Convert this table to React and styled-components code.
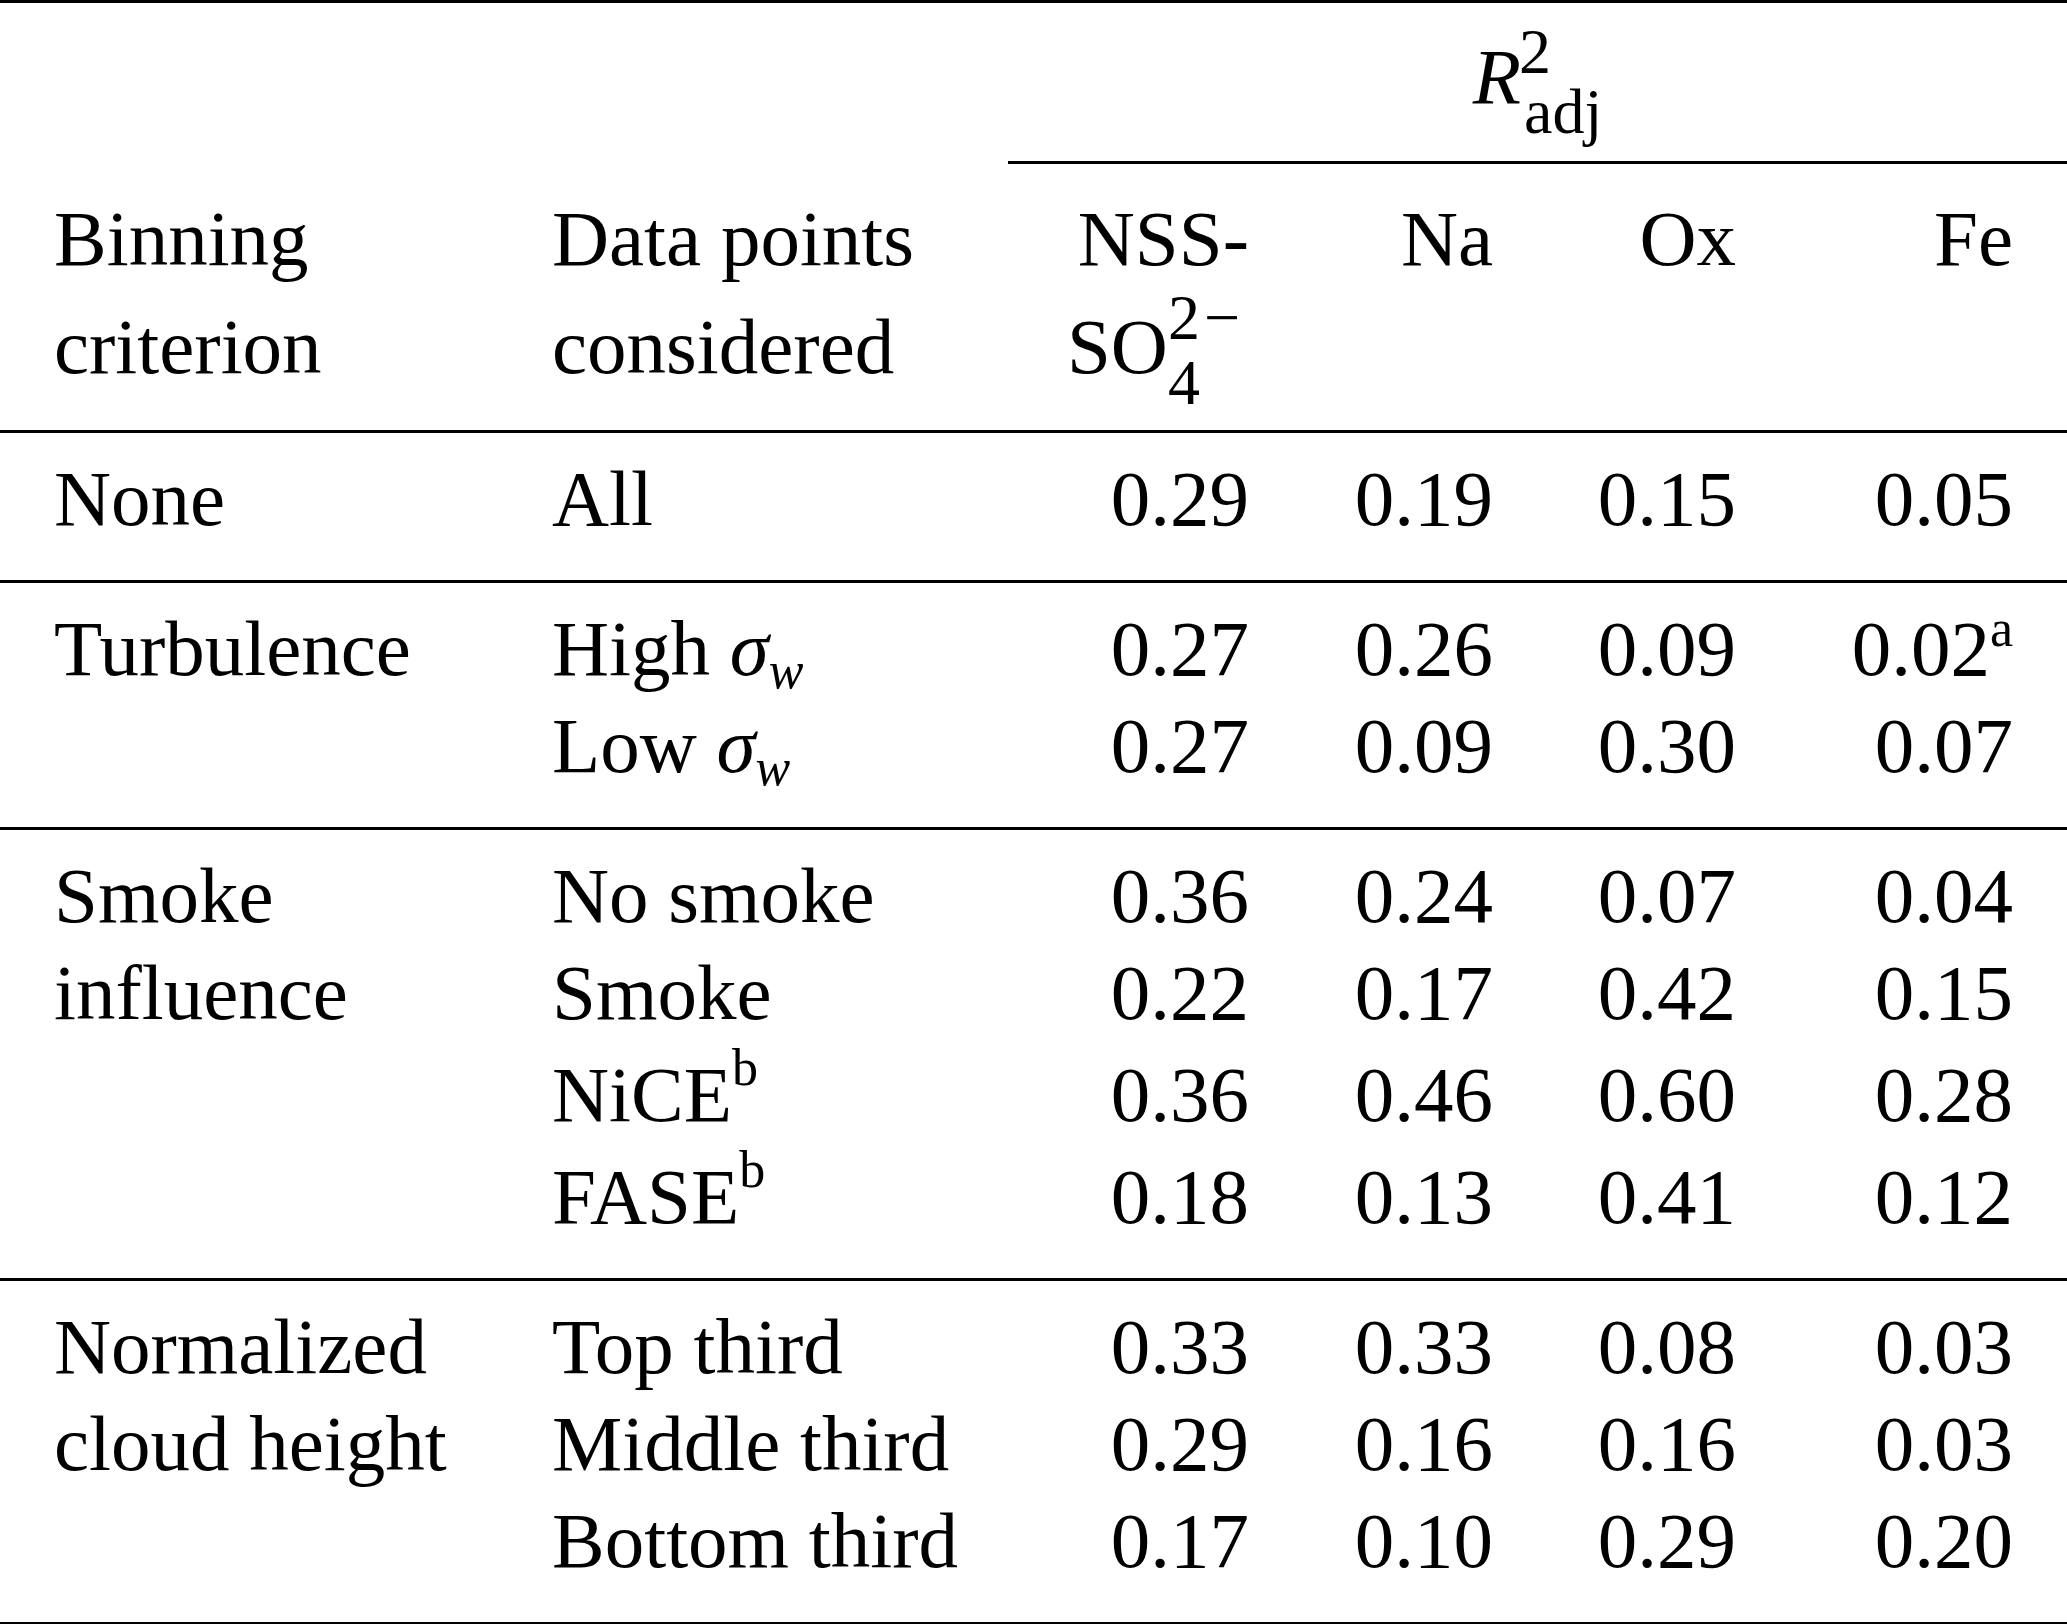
import React from "react";
import styled, { createGlobalStyle } from "styled-components";

const GlobalStyle = createGlobalStyle`
  html, body {
    margin: 0;
    padding: 0;
    background: #fff;
  }
  body {
    font-family: "Liberation Serif", "Times New Roman", serif;
    color: #000;
  }
`;

// widths of the five columns right of the label column
const COLS = "483px 268px 244px 243px 304px";

const groups = [
  {
    label: "None",
    rows: [{ point: "All", vals: ["0.29", "0.19", "0.15", "0.05"] }],
  },
  {
    label: "Turbulence",
    rows: [
      { point: "High", sigma: true, vals: ["0.27", "0.26", "0.09", { v: "0.02", note: "a" }] },
      { point: "Low", sigma: true, vals: ["0.27", "0.09", "0.30", "0.07"] },
    ],
  },
  {
    label: "Smoke influence",
    rows: [
      { point: "No smoke", vals: ["0.36", "0.24", "0.07", "0.04"] },
      { point: "Smoke", vals: ["0.22", "0.17", "0.42", "0.15"] },
      { point: "NiCE", note: "b", vals: ["0.36", "0.46", "0.60", "0.28"] },
      { point: "FASE", note: "b", vals: ["0.18", "0.13", "0.41", "0.12"] },
    ],
  },
  {
    label: "Normalized cloud height",
    rows: [
      { point: "Top third", vals: ["0.33", "0.33", "0.08", "0.03"] },
      { point: "Middle third", vals: ["0.29", "0.16", "0.16", "0.03"] },
      { point: "Bottom third", vals: ["0.17", "0.10", "0.29", "0.20"] },
    ],
  },
];

const raiseFor = { a: 29, b: 36 };

function App() {
  return (
    <>
      <GlobalStyle />
      <Table>
        <TopRow>
          <div />
          <SpanCell>
            <Var>R</Var>
            <Scripts $pitch={60} $raise={30} $shift={-5}>
              <ScriptLine $indent={3}>2</ScriptLine>
              <ScriptLine $indent={8}>adj</ScriptLine>
            </Scripts>
          </SpanCell>
        </TopRow>

        <Group $head>
          <Label>Binning criterion</Label>
          <Cells>
            <Point $wrap>Data points considered</Point>
            <Value>
              NSS-
              <br />
              SO
              <Scripts $pitch={65} $raise={34} $right={9}>
                <ScriptLine>
                  2<Minus>−</Minus>
                </ScriptLine>
                <ScriptLine>4</ScriptLine>
              </Scripts>
            </Value>
            <Value>Na</Value>
            <Value>Ox</Value>
            <Value $last>Fe</Value>
          </Cells>
        </Group>

        {groups.map((g) => (
          <Group key={g.label}>
            <Label>{g.label}</Label>
            <Rows>
              {g.rows.map((r, i) => (
                <Cells key={i} $lift={!!r.note}>
                  <Point>
                    {r.point}
                    {r.sigma && (
                      <>
                        {" "}
                        <Var>σ</Var>
                        <Sub>w</Sub>
                      </>
                    )}
                    {r.note && <Sup $raise={raiseFor[r.note]}>{r.note}</Sup>}
                  </Point>
                  {r.vals.map((v, j) => (
                    <Value key={j} $last={j === 3}>
                      {typeof v === "string" ? (
                        v
                      ) : (
                        <>
                          {v.v}
                          <Sup $raise={raiseFor[v.note]}>{v.note}</Sup>
                        </>
                      )}
                    </Value>
                  ))}
                </Cells>
              ))}
            </Rows>
          </Group>
        ))}
      </Table>
    </>
  );
}

export default App;

const Table = styled.div`
  width: 2067px;
  border-top: 3px solid #000;
  font-size: 79px;
`;

const TopRow = styled.div`
  display: grid;
  grid-template-columns: 1008px 1fr;
  height: 161px;
`;

const SpanCell = styled.div`
  border-bottom: 3px solid #000;
  padding-top: 25px;
  line-height: 97px;
  text-align: center;
  white-space: nowrap;
`;

const Var = styled.span`
  font-style: italic;
`;

const Scripts = styled.span`
  display: inline-grid;
  justify-items: start;
  font-size: 64px;
  line-height: ${(p) => p.$pitch}px;
  vertical-align: ${(p) => p.$raise}px;
  margin: -8px ${(p) => p.$right || 0}px -17px ${(p) => p.$shift || 0}px;
  text-align: left;
`;

const ScriptLine = styled.span`
  padding-left: ${(p) => p.$indent || 0}px;
  white-space: nowrap;
`;

const Minus = styled.span`
  margin-left: 4px;
`;

const Group = styled.div`
  display: flex;
  border-bottom: 3px solid #000;
  padding: ${(p) => (p.$head ? "21px 0 29px" : "17px 0 33px")};
  line-height: ${(p) => (p.$head ? 108 : 97)}px;
`;

const Label = styled.div`
  flex: 0 0 525px;
  box-sizing: border-box;
  padding: 0 27px 0 54px;
`;

const Rows = styled.div`
  display: flex;
  flex-direction: column;
`;

const Cells = styled.div`
  display: grid;
  grid-template-columns: ${COLS};
  align-items: start;
  margin-top: ${(p) => (p.$lift ? 5 : 0)}px;
`;

const Point = styled.div`
  padding-left: 27px;
  white-space: ${(p) => (p.$wrap ? "normal" : "nowrap")};
`;

const Value = styled.div`
  text-align: right;
  white-space: nowrap;
  padding-right: ${(p) => (p.$last ? 54 : 27)}px;
`;

const Sup = styled.span`
  font-size: 52px;
  line-height: 0;
  vertical-align: ${(p) => p.$raise}px;
`;

const Sub = styled.span`
  font-size: 52px;
  font-style: italic;
  line-height: 0;
  vertical-align: -13px;
`;
